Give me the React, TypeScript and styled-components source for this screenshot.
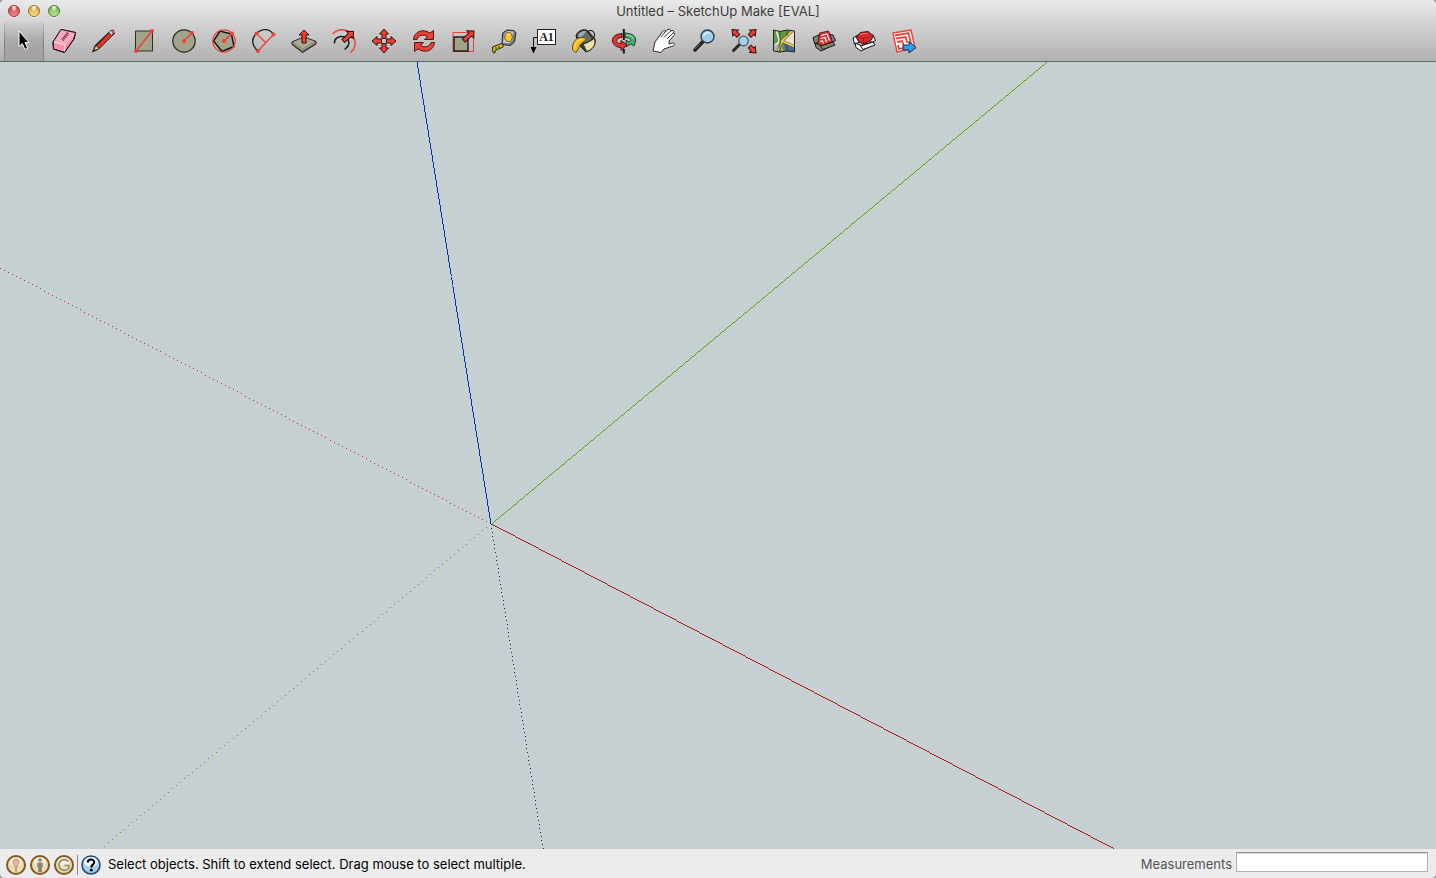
import React from "react";
import styled, { createGlobalStyle } from "styled-components";

const GlobalStyle = createGlobalStyle`
  * { box-sizing: border-box; }
  html, body { margin: 0; background: #9a9d9e; }
  body { font-family: Inter, "Noto Sans", sans-serif; font-size: 13px; line-height: 20px; color: #000; }
`;

const Window = styled.div`
  display: flex;
  flex-direction: column;
  min-height: 100vh;
  border-radius: 5px;
  overflow: hidden;
  background: #ececec;
`;

const Header = styled.header`
  flex: none;
  background: linear-gradient(#eaeaea, #d2d2d2 40%, #b1b1b1);
  border-bottom: 1px solid #686868;
`;

const TitleBar = styled.div`
  display: grid;
  grid-template-columns: 1fr auto 1fr;
  align-items: center;
  height: 22px;
  padding: 0 8px;
`;

const Lights = styled.div`
  display: flex;
  gap: 8px;
`;

const Light = styled.button<{ $rim: string; $top: string; $bottom: string }>`
  width: 12px;
  height: 12px;
  padding: 0;
  border: 1px solid ${(p) => p.$rim};
  border-radius: 50%;
  background: radial-gradient(ellipse at 50% 5%, #fff 5%, transparent 45%),
    linear-gradient(${(p) => p.$top}, ${(p) => p.$bottom});
  box-shadow: 0 1px 0 #ffffff80;
`;

const Title = styled.h1`
  margin: 0;
  font-size: 13px;
  font-weight: 400;
  line-height: 22px;
  color: #3c3c3c;
`;

const Tools = styled.div`
  display: flex;
  height: 39px;
  padding-left: 4px;
`;

const ToolButton = styled.button<{ $active: boolean }>`
  display: flex;
  align-items: flex-start;
  justify-content: center;
  flex: none;
  width: 40px;
  padding: 3px 0 0;
  border: solid transparent;
  border-width: 0 1px;
  border-image: ${(p) => (p.$active ? "linear-gradient(#c8c8c8, #7c7c7c 50%, #8e8e8e) 1" : "none")};
  background: ${(p) => (p.$active ? "linear-gradient(#d0d0d0, #a8a8a8 50%, #a2a2a2)" : "none")};
`;

const ToolIcon = styled.svg`
  display: block;
  width: 32px;
  height: 32px;
`;

const Viewport = styled.main`
  flex: 1;
  display: flex;
  min-height: 0;
  background: #c6cfd2;
`;

const Axes = styled.svg`
  flex: 1;
  width: 100%;
  height: calc(100vh - 91px);
`;

const StatusBar = styled.footer`
  display: flex;
  align-items: center;
  flex: none;
  height: 29px;
  padding: 2px 8px 0 6px;
  background: #ececec;
`;

const Badges = styled.div`
  display: flex;
  gap: 4px;
  padding-right: 3px;
`;

const Divider = styled.span`
  width: 1px;
  height: 20px;
  margin-right: 3px;
  background: #8a8a8a;
`;

const BadgeButton = styled.button`
  display: flex;
  width: 20px;
  height: 20px;
  padding: 0;
  border: 0;
  background: none;
`;

const Message = styled.p`
  flex: 1;
  margin: 0;
  padding: 0 0 2px 7px;
`;

const Measure = styled.label`
  padding: 0 4px 2px 0;
  color: #555;
`;

const MeasureInput = styled.input`
  align-self: flex-start;
  width: 192px;
  height: 20px;
  margin: 1px 0 0;
  padding: 0 4px;
  border: 1px solid #b0b0b0;
  border-top-color: #8e8e8e;
  background: #fff;
  font: inherit;
  box-shadow: inset 0 1px 1px #dcdcdc;
`;

const RED = "#ee4035";
const STONE = "#a3a28a";

const Dot = ({ x, y }: { x: number; y: number }) => <circle cx={x} cy={y} r="2" fill={RED} />;

/* A block arrow that points up, with its tip at the origin. */
const Arrow = ({ x, y, turn = 0, long = 10, wide = 4.5 }: { x: number; y: number; turn?: number; long?: number; wide?: number }) => (
  <path
    d={`M0 0L${wide} 5H2V${long}H-2V5H${-wide}Z`}
    transform={`translate(${x} ${y}) rotate(${turn})`}
    fill={RED}
    stroke="#33100d"
    strokeWidth="1"
  />
);

const tools: { name: string; art: React.ReactNode }[] = [
  {
    name: "Select",
    art: <path d="M11 6V21.500L14.300 18.600L17 24.500L19.700 23.200L17 17.500H21Z" fill="#000" stroke="#fff" strokeWidth="1" />,
  },
  {
    name: "Eraser",
    art: (
      <g stroke="#1c1013" strokeWidth="1" strokeLinejoin="round">
        <path d="M13 4.500L27.500 7.500L26 14L16.500 27.500L5.500 24L5 17Z" fill="#f98fab" />
        <path d="M13 4.500L27.500 7.500L17 20L5 17Z" fill="#f7a9bd" stroke="none" />
        <path d="M5.500 17L17 20L27 8M17 20L16.500 27" fill="none" stroke="#ffd5df" />
        <path d="M13 4.500L27.500 7.500L26 14L16.500 27.500L5.500 24L5 17Z" fill="none" />
        <path d="M20 8L14.500 15" fill="none" stroke="#6d2340" strokeWidth="3" strokeDasharray="1.200 .8" />
      </g>
    ),
  },
  {
    name: "Line",
    art: (
      <g strokeLinejoin="round">
        <path d="M4.500 27L7 20.500L22.500 5.500L25.500 5L26.500 8.500L11 24Z" fill="#241312" stroke="#150a0a" strokeWidth=".6" />
        <path d="M8.500 21L21 8L24 10.500L11.500 23Z" fill="#e23420" />
        <path d="M6 25L8 21L11 23.500Z" fill="#efc179" />
        <path d="M21 7L23 5.500L25 8.500L23.500 10Z" fill="#d3dada" />
        <path d="M23.500 5.500L25.500 5.500L26 8L25 8.500Z" fill="#f06b70" />
      </g>
    ),
  },
  {
    name: "Rectangle",
    art: (
      <>
        <rect x="7.500" y="6" width="17" height="20" fill={STONE} stroke="#2e2e29" />
        <path d="M8 26L24 6" stroke={RED} strokeWidth="1.500" />
        <Dot x={8} y={26} />
        <Dot x={24} y={6} />
      </>
    ),
  },
  {
    name: "Circle",
    art: (
      <>
        <circle cx="16" cy="16" r="11.200" fill={STONE} stroke="#2b2b26" strokeWidth="1.200" />
        <path d="M16 16L24 8" stroke={RED} strokeWidth="1.500" />
        <Dot x={16} y={16} />
        <Dot x={24} y={8} />
      </>
    ),
  },
  {
    name: "Polygon",
    art: (
      <>
        <path d="M23.500 9L12 6L5.500 16L14 26.500L26 21.500Z" fill={STONE} stroke="#111" strokeWidth="1.500" />
        <circle cx="16" cy="16" r="11.200" fill="none" stroke={RED} strokeWidth="1.200" />
        <path d="M16 16L24 8.500" stroke={RED} strokeWidth="1.500" />
        <Dot x={16} y={16} />
        <Dot x={24} y={8.5} />
      </>
    ),
  },
  {
    name: "Arc",
    art: (
      <>
        <path d="M10 26C4 21 2.500 14 8.500 8.500C14 3 21 3.500 25.500 9" fill="none" stroke="#222" strokeWidth="1.400" />
        <path d="M10 26L25.500 9.500M8.500 8.500L17.500 17.500" stroke={RED} strokeWidth="1.300" />
        <Dot x={10} y={26} />
        <Dot x={8.5} y={8.5} />
        <Dot x={25.5} y={9.5} />
      </>
    ),
  },
  {
    name: "Push/Pull",
    art: (
      <>
        <path d="M4 17L16 12L28 16.500V19L14.500 27.500L4 19.500Z" fill="#6d6e57" stroke="#1e1f19" />
        <path d="M4 17L16 12L28 16.500L14.500 24.500Z" fill="#a9aa90" stroke="#1e1f19" strokeWidth=".6" />
        <path d="M5 18L14.500 25L27 17.500" fill="none" stroke="#c9cab1" strokeWidth=".8" />
        <Arrow x={16} y={5} long={13} wide={5} />
      </>
    ),
  },
  {
    name: "Offset",
    art: (
      <>
        <path d="M4.500 9C12 1.500 22 4.500 26 13C28.500 19 27 24 22.500 27.500" fill="none" stroke={RED} strokeWidth="1.400" />
        <path d="M6.500 18.500C6 14 10 11 14 11.500C21 12 24 19 16.500 24.500" fill="none" stroke="#1a1a1a" strokeWidth="1.500" />
        <Arrow x={25.5} y={6.5} turn={47} long={14} wide={5} />
      </>
    ),
  },
  {
    name: "Move",
    art: (
      <>
        <Arrow x={16} y={4} long={9.5} />
        <Arrow x={28} y={16} turn={90} long={9.5} />
        <Arrow x={16} y={28} turn={180} long={9.5} />
        <Arrow x={4} y={16} turn={270} long={9.5} />
      </>
    ),
  },
  {
    name: "Rotate",
    art: (
      <g fill={RED} stroke="#541713" strokeWidth="1">
        <path d="M5.500 14.500C6 7 14 3 22 8L25.500 5.500V14.500H16.500L19.500 11.500C15 9 10.500 10 9 14.500Z" />
        <path d="M26.500 17.500C26 25 18 29 10 24L6.500 26.500V17.500H15.500L12.500 20.500C17 23 21.500 22 23 17.500Z" />
      </g>
    ),
  },
  {
    name: "Scale",
    art: (
      <>
        <rect x="5" y="7.500" width="20.500" height="19" fill="none" stroke={RED} />
        <rect x="6" y="12" width="14" height="14" fill={STONE} stroke="#161616" strokeWidth="1.400" />
        <Arrow x={26} y={6} turn={47} long={14} wide={5} />
      </>
    ),
  },
  {
    name: "Tape Measure",
    art: (
      <>
        <path d="M4.500 22L15 18V22L7 25.500L7 28L5 27.500Z" fill="#f1c022" stroke="#26220e" />
        <path d="M8 22V24M11 21V23" stroke="#26220e" />
        <path d="M14.500 8L19 5L26 5.500L28 8L26.500 17L22.500 20.500L14 19.500Z" fill="#77787c" stroke="#2c2c2c" />
        <path d="M16 9L19.500 6L25.500 6.500L24.500 15L21 18.500L15 18Z" fill="#c3c4ca" />
        <ellipse cx="20.500" cy="12" rx="3.800" ry="4.600" fill="#f6c72a" stroke="#6e6026" />
        <path d="M19 10C20 9 21 9 22 10" fill="none" stroke="#fff0a0" />
      </>
    ),
  },
  {
    name: "Text",
    art: (
      <>
        <path d="M10 12.500H5.500V23" fill="none" stroke="#111" />
        <path d="M2.500 22H8.500L5.500 28.500Z" />
        <rect x="9.500" y="4.500" width="18" height="15" fill="#fff" stroke="#222" />
        <text x="18.500" y="16" textAnchor="middle" fontFamily="Liberation Serif, serif" fontSize="12" fontWeight="700" fill="#222">A1</text>
      </>
    ),
  },
  {
    name: "Paint Bucket",
    art: (
      <>
        <path d="M8 11C9 6 16 3 20 6L27 14C28 20 24 25 18 27L12 21Z" fill="#3c403c" stroke="#171717" />
        <path d="M15 19C19 18 23 16 26 13C29 19 25 25 18.500 26.500Z" fill="#e6d7a2" stroke="#2b281d" />
        <path d="M9 11C10 7 16 4 19 6C20 9 14 13 10 13Z" fill="#93b0ad" stroke="#252a2a" />
        <path d="M18 6L24 14C21 16 18 17 15 18L13 14Z" fill="#6a6e68" />
        <path d="M20 7C22 4 26 6 26.500 9C27 12 25 15 22.500 15" fill="none" stroke="#222" strokeWidth="1.200" />
        <path d="M4.500 25C4 17 8 12 15 12.500C19 13 18 16 15 17C11 19 11 24 8 27.500Z" fill="#f6bd24" stroke="#665019" />
        <path d="M6.500 23C7 18 10 14.500 14 14.500" fill="none" stroke="#ffe277" />
        <path d="M20 24L26 18M18 21L23 18" stroke="#fff5ca" />
      </>
    ),
  },
  {
    name: "Orbit",
    art: (
      <>
        <path d="M17 8C24 8.500 28.500 11 27.500 16L26 21L23 19L18 22V15L21 17C24 16 23.500 13 17 12.500Z" fill="#4eac72" stroke="#12442a" />
        <path d="M14 8.500C8 9 4 11.500 4.500 16C5 20 9 22.500 13 22.500V25.500L19 20L13 15.500V18.500C9 18.500 8 16.500 9 14.500C10 13 12 12.500 14 12.500Z" fill="#df3731" stroke="#47100e" />
        <path d="M18 10C22 10 25 12 25.500 14" fill="none" stroke="#94dbac" />
        <path d="M15.800 4V15M15.800 24V28.500" stroke="#151515" strokeWidth="2" />
      </>
    ),
  },
  {
    name: "Pan",
    art: (
      <>
        <path d="M5 26L7 17L15 6C16 4.500 18 5.500 17 7L20 4.500C22 3.500 23 5 22 6.500L24 5.500C26 5 26.500 7 25 8L26 8C27 8.500 27 10 25.500 11L21 16V19L25 18C27 18 27 20 25 21L16 24L13 27.500Z" fill="#fff" stroke="#2c2c2c" />
        <path d="M17 7L13 12M21.500 7L16 12.500M25 8L19 14" fill="none" stroke="#333" />
      </>
    ),
  },
  {
    name: "Zoom",
    art: (
      <>
        <path d="M15 16.500L7 25" stroke="#242424" strokeWidth="3.600" strokeLinecap="round" />
        <path d="M12 19L7 24" stroke="#666" />
        <circle cx="19.500" cy="11.500" r="6.500" fill="#9dcbed" stroke="#353b44" strokeWidth="1.400" />
        <path d="M15.500 11C17 7 21 7 23 9" fill="none" stroke="#daf1ff" strokeWidth="1.400" />
      </>
    ),
  },
  {
    name: "Zoom Extents",
    art: (
      <>
        <path d="M12 19L5.500 25.500" stroke="#282828" strokeWidth="3" strokeLinecap="round" />
        <circle cx="15.500" cy="16" r="4.800" fill="#a2d2f1" stroke="#475767" strokeWidth="1.200" />
        <Arrow x={4} y={4.5} turn={-45} long={9} wide={4} />
        <Arrow x={28} y={4.5} turn={45} long={9} wide={4} />
        <Arrow x={28} y={28} turn={135} long={9} wide={4} />
      </>
    ),
  },
  {
    name: "Add Location",
    art: (
      <>
        <path d="M5.500 5L12 6.500L19 5L26.500 6V27L19 26L12 27L5.500 26Z" fill="#5d9c3e" />
        <path d="M25 6H26.500V21L14 15Z" fill="#f1dfcc" />
        <path d="M15 16L26.500 21V27L17 26Z" fill="#486a9c" />
        <path d="M6 20L12 17L15 26H6Z" fill="#a8b4ae" />
        <path d="M9 6C8 10 12 12 11 17L7 20" fill="none" stroke="#d9e3dc" strokeWidth="2" />
        <path d="M24 6L14 16L10 27M14 16L26 21.500" fill="none" stroke="#5c5430" strokeWidth="3" />
        <path d="M24 6L14 16L10 27M14 16L26 21.500" fill="none" stroke="#f2d84e" strokeWidth="1.600" />
        <path d="M12 7V27M19 5V11M19 20V26" stroke="#293126" opacity=".7" />
        <path d="M5.500 5L12 6.500L19 5L26.500 6V27L19 26L12 27L5.500 26Z" fill="none" stroke="#202820" />
      </>
    ),
  },
  {
    name: "3D Warehouse",
    art: (
      <>
        <g fill="#85866f" stroke="#161616" strokeLinejoin="round">
          <path d="M5 12.500L11 10L12 17L6.500 18.500Z" />
          <path d="M22 9.500L25 10L27.500 15.500L23 18Z" />
          <path d="M7 18L13 20.500L24 17V20.500L13 26L8 22.500Z" />
          <path d="M12.500 21L25 17L27 20L15 24.500Z" />
        </g>
        <path d="M11.500 8L20.500 6L24.500 16.500L14 20.500L9.500 19Z" fill="#df2f30" stroke="#3d1414" strokeWidth=".8" />
        <path d="M13 10.500L19 9L21.500 15.500M12.500 13.500L17 12.500L18.500 17M12 16.500L14.500 16L15.500 18.500" fill="none" stroke="#fff" strokeWidth="1.200" />
      </>
    ),
  },
  {
    name: "Extension Warehouse",
    art: (
      <>
        <g fill="#f3f3f3" stroke="#161616" strokeLinejoin="round">
          <path d="M5 13L10 10L12 17L6.500 19Z" />
          <path d="M22 9.500L25 10L27.500 15.500L23 18Z" />
          <path d="M7 18L13 20.500L24 17V20.500L13 26L8 22.500Z" />
          <path d="M12.500 21L25 17L27 20L15 24.500Z" />
        </g>
        <path d="M8 12L12.500 7.500L20 6.500L25.500 11L23 15L16 19L11 17Z" fill="#d92b2b" stroke="#3d1010" />
        <path d="M9 12L15 13.500L24.500 11M15 13.500L16 18" fill="none" stroke="#96191b" strokeWidth=".8" />
        <path d="M12 10L15 8.500L19 8.500" fill="none" stroke="#f5726a" />
      </>
    ),
  },
  {
    name: "Send to LayOut",
    art: (
      <>
        <path d="M5 8L23 5L27 23L9 27Z" fill="#fff" stroke={RED} strokeWidth="1.400" />
        <path d="M7 10.500L20.500 8L23 19M8 13.500L17.500 12L19.500 18M9 17L14 16L15.500 20M10 20L11 24L15 23" fill="none" stroke={RED} strokeWidth="1.800" />
        <path d="M15 20H21V16.500L28 22.500L21 28V25H15Z" fill="#319df0" stroke="#152e50" />
      </>
    ),
  },
];

const Badge = ({ children }: { children: React.ReactNode }) => (
  <svg width="20" height="20" viewBox="0 0 20 20">
    <circle cx="10" cy="10" r="9" fill="#eadcb4" stroke="#82561d" strokeWidth="2" />
    <ellipse cx="10" cy="6.500" rx="6" ry="4" fill="#f6eedb" />
    {children}
  </svg>
);

/* Single pixels from one point to the other, one every `step` pixels of the longer direction. */
const pixels = (x1: number, y1: number, x2: number, y2: number, step: number) => {
  const count = Math.floor(Math.max(Math.abs(x2 - x1), Math.abs(y2 - y1)) / step);
  return Array.from({ length: count + 1 }, (_, i) => {
    const t = i / count;
    return `M${Math.floor(x1 + (x2 - x1) * t)} ${Math.floor(y1 + (y2 - y1) * t)}h1v1h-1z`;
  }).join("");
};

export default function App() {
  return (
    <>
      <GlobalStyle />
      <Window>
        <Header>
          <TitleBar>
            <Lights>
              <Light aria-label="Close" $rim="#8c3836" $top="#c93a3e" $bottom="#f58985" />
              <Light aria-label="Minimize" $rim="#9c6b29" $top="#dc9227" $bottom="#fce486" />
              <Light aria-label="Zoom window" $rim="#4c7a37" $top="#5ca43e" $bottom="#bfeb99" />
            </Lights>
            <Title>Untitled – SketchUp Make [EVAL]</Title>
          </TitleBar>
          <Tools role="toolbar" aria-label="Tools">
            {tools.map((tool, i) => (
              <ToolButton key={tool.name} aria-label={tool.name} aria-pressed={i === 0} $active={i === 0}>
                <ToolIcon viewBox="0 0 32 32">{tool.art}</ToolIcon>
              </ToolButton>
            ))}
          </Tools>
        </Header>
        <Viewport>
          <Axes viewBox="0 0 1436 787" preserveAspectRatio="xMidYMid slice" shapeRendering="crispEdges" role="img" aria-label="Model axes">
            <path d={pixels(491, 462, 0, 206, 4)} fill="#d0241c" />
            <path d={pixels(491, 462, 104, 784, 4)} fill="#5aa80c" />
            <path d={pixels(491, 462, 543, 786, 4)} fill="#10226c" />
            <path d={pixels(491, 462, 1048, -1, 1)} fill="#5aa80c" />
            <path d={pixels(491, 462, 1114, 787, 1)} fill="#a81c17" />
            <path d={pixels(491, 462, 417, -1, 1)} fill="#0032b4" />
          </Axes>
        </Viewport>
        <StatusBar>
          <Badges>
            <BadgeButton aria-label="Geo-location">
              <Badge>
                <path d="M10 17L8.500 10C6 8 7 4 10 4S14 8 11.500 10Z" fill="#efaea0" stroke="#b78a75" strokeWidth=".8" />
              </Badge>
            </BadgeButton>
            <BadgeButton aria-label="Credits">
              <Badge>
                <circle cx="10" cy="5" r="1.800" fill="#85806f" />
                <path d="M7 7.500H13V12H12V17H8V12H7Z" fill="#9b9686" />
                <path d="M10 8V17" stroke="#67645b" />
              </Badge>
            </BadgeButton>
            <BadgeButton aria-label="Sign in">
              <Badge>
                <path d="M14.500 6.500C12 3.500 5 4 5 10S12 16.500 15 13.500V10.500H10.500" fill="none" stroke="#938b78" strokeWidth="1.600" />
              </Badge>
            </BadgeButton>
          </Badges>
          <Divider />
          <BadgeButton aria-label="Help">
            <svg width="20" height="20" viewBox="0 0 20 20">
              <circle cx="10" cy="10" r="9" fill="#a8cfea" stroke="#234b70" strokeWidth="1.600" />
              <ellipse cx="10" cy="7" rx="7" ry="5" fill="#e9f5fc" />
              <path d="M6.800 7.500C6.800 3.500 13.500 3.500 13.200 7.500C13 9.500 10.300 10 10.300 12.500" fill="none" stroke="#000" strokeWidth="2.200" />
              <circle cx="10.300" cy="15.200" r="1.400" />
            </svg>
          </BadgeButton>
          <Message>Select objects. Shift to extend select. Drag mouse to select multiple.</Message>
          <Measure htmlFor="measurements">Measurements</Measure>
          <MeasureInput id="measurements" type="text" />
        </StatusBar>
      </Window>
    </>
  );
}
